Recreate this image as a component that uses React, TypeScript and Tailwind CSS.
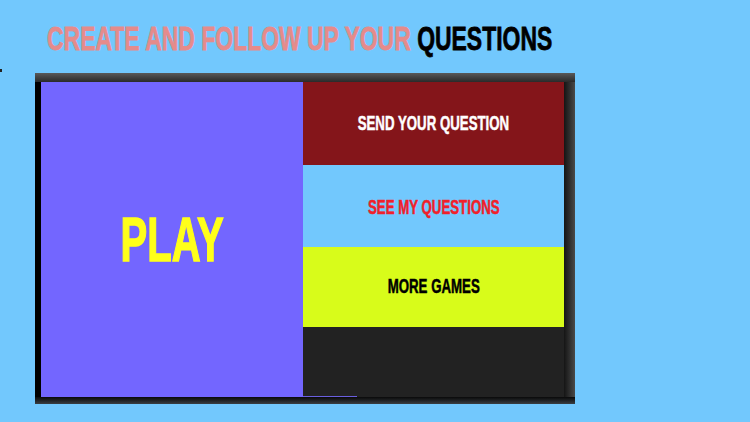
import React from 'react';

const font = { fontFamily: '"Liberation Sans", Arial, sans-serif' };

export default function App() {
  return (
    <div className="relative w-[750px] h-[422px] bg-[#72c8fd] overflow-hidden" style={font}>
      {/* stray mark on left edge */}
      <div className="absolute left-0 top-[69px] w-[2px] h-[3px] bg-[#222]" />

      <div className="flex flex-col pl-[35px] pt-[22px]">
        <div className="pl-[12px] h-[34px]">
          <h1 className="inline-block origin-left scale-x-[0.685] text-[33.5px] leading-[34px] font-bold whitespace-nowrap [-webkit-text-stroke:0.8px_currentColor]">
            <span className="text-[#e58b8b]">CREATE AND FOLLOW UP YOUR </span>
            <span className="text-black">QUESTIONS</span>
          </h1>
        </div>

        <div className="mt-[17px] w-[540px] h-[331px] flex flex-col bg-gradient-to-r from-[#2c2c2c] via-[#3c3c3c] to-[#6a6a6a] rounded-tr-[2px]">
          <div className="h-[9px] bg-gradient-to-b from-[#5a5a5a] to-[#2a2a2a]" />
          <div className="flex flex-1">
            <div className="w-[6px] bg-black" />
            <div className="w-[262px] bg-[#7366ff] flex items-center justify-center">
              <span className="inline-block scale-x-[0.635] text-[#ffff1a] text-[63px] font-bold leading-none [-webkit-text-stroke:1.5px_currentColor]">PLAY</span>
            </div>
            <div className="w-[261px] flex flex-col">
              <div className="h-[83px] bg-[#84151a] flex items-center justify-center">
                <span className="inline-block scale-x-[0.68] text-white text-[19.5px] font-bold whitespace-nowrap [-webkit-text-stroke:0.5px_currentColor]">SEND YOUR QUESTION</span>
              </div>
              <div className="h-[82px] bg-[#72c8fd] flex items-center justify-center">
                <span className="mt-[3px] inline-block scale-x-[0.68] text-[#f0202a] text-[19.5px] font-bold whitespace-nowrap [-webkit-text-stroke:0.5px_currentColor]">SEE MY QUESTIONS</span>
              </div>
              <div className="h-[80px] bg-[#d8fc1a] flex items-center justify-center">
                <span className="inline-block scale-x-[0.68] text-black text-[19.5px] font-bold whitespace-nowrap [-webkit-text-stroke:0.5px_currentColor]">MORE GAMES</span>
              </div>
              <div className="flex-1 bg-[#222222] flex flex-col justify-end">
                <div className="w-[54px] h-[1px] bg-[#6a5fe0]" />
              </div>
            </div>
            <div className="flex-1 bg-gradient-to-r from-[#151515] to-[#4a4a4a]" />
          </div>
          <div className="h-[7px] bg-gradient-to-b from-[#0a0a0a] to-[#3a3f44]" />
        </div>
      </div>
    </div>
  );
}
